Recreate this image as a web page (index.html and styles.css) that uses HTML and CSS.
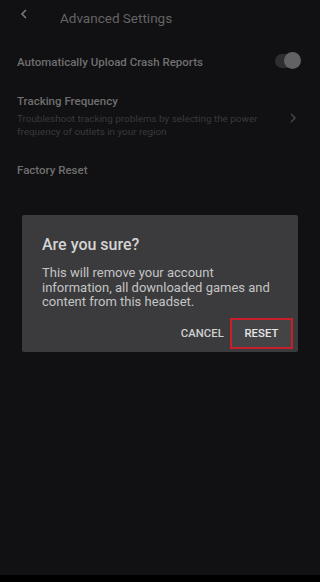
FILE: index.html
```html
<!DOCTYPE html>
<html>
<head>
<meta charset="utf-8">
<link rel="stylesheet" href="styles.css">
</head>
<body>
<div class="screen">
  <header class="topbar">
    <svg class="back" width="8" height="10" viewBox="0 0 8 10"><path d="M6 1 L2 5 L6 9" fill="none" stroke="#7a7a7a" stroke-width="1.6"/></svg>
    <span class="title">Advanced Settings</span>
  </header>
  <div class="row row-toggle">
    <span class="label">Automatically Upload Crash Reports</span>
    <span class="toggle"><span class="knob"></span></span>
  </div>
  <div class="row row-nav">
    <div class="texts">
      <div class="label">Tracking Frequency</div>
      <div class="desc">Troubleshoot tracking problems by selecting the power frequency of outlets in your region</div>
    </div>
    <svg class="chev" width="8" height="10" viewBox="0 0 8 10"><path d="M2 1 L6 5 L2 9" fill="none" stroke="#4a4a4a" stroke-width="1.4"/></svg>
  </div>
  <div class="row row-plain">
    <span class="label">Factory Reset</span>
  </div>

  <div class="dialog">
    <h2 class="d-title">Are you sure?</h2>
    <p class="d-body">This will remove your account information, all downloaded games and content from this headset.</p>
    <div class="d-actions">
      <button class="btn btn-cancel">CANCEL</button>
      <button class="btn btn-reset">RESET</button>
    </div>
  </div>
</div>
</body>
</html>
```

FILE: styles.css
```css
html, body {
  margin: 0;
  padding: 0;
  background: #000;
}
body {
  width: 320px;
  height: 582px;
  font-family: Roboto, "Noto Sans", sans-serif;
  overflow: hidden;
}
.screen {
  position: relative;
  height: 575px;
  background: #111013;
  box-sizing: border-box;
}
.topbar {
  display: flex;
  align-items: center;
  height: 34px;
  padding-left: 20px;
}
.back { margin-top: -6px; }
.title {
  margin-left: 32px;
  color: #646464;
  font-size: 13.5px;
  margin-top: 1px;
}
.row {
  display: flex;
  align-items: center;
  padding: 0 20px 0 17px;
}
.label {
  color: #6f6f6f;
  font-size: 11.5px;
  font-weight: 500;
}
.row-toggle { height: 52px; margin-top: 2px; }
.row-toggle .label { flex: 1; }
.toggle {
  position: relative;
  width: 24px;
  height: 14px;
  border-radius: 7px;
  background: #2e2e30;
  margin-right: 1px;
  margin-top: -2px;
}
.knob {
  position: absolute;
  right: -2px;
  top: -2px;
  width: 17px;
  height: 17px;
  border-radius: 50%;
  background: #626264;
}
.row-nav { padding-top: 6px; }
.texts { flex: 1; }
.desc {
  color: #3a3a3b;
  font-size: 9.9px;
  line-height: 12.5px;
  margin-top: 5px;
  max-width: 262px;
}
.chev { margin-right: 3px; margin-top: 4px; }
.row-plain { margin-top: 25px; }

.dialog {
  position: absolute;
  left: 22px;
  top: 215px;
  width: 276px;
  height: 137px;
  box-sizing: border-box;
  background: #3b3b3d;
  border-radius: 2px;
  padding: 20px 20px 0 20px;
  color: #d4d4d4;
}
.d-title {
  margin: 0;
  font-size: 16px;
  font-weight: 500;
  line-height: 20px;
}
.d-body {
  margin: 11px 0 0 0;
  font-size: 13px;
  line-height: 14.5px;
  color: #c4c4c4;
}
.d-actions {
  display: flex;
  justify-content: flex-end;
  align-items: center;
  margin: 8px -15px 0 0;
  gap: 6px;
}
.btn {
  font-family: Roboto, "Noto Sans", sans-serif;
  background: none;
  border: 2px solid transparent;
  color: #cfcfcf;
  font-size: 11.3px;
  font-weight: 500;
  padding: 0;
  height: 31px;
  width: 63px;
  letter-spacing: 0.1px;
}
.btn-cancel {
  width: auto;
  border: 0;
  padding: 0;
}
.btn-reset {
  border-color: #c8202a;
  background: #444446;
  color: #e6e6e6;
}
```
